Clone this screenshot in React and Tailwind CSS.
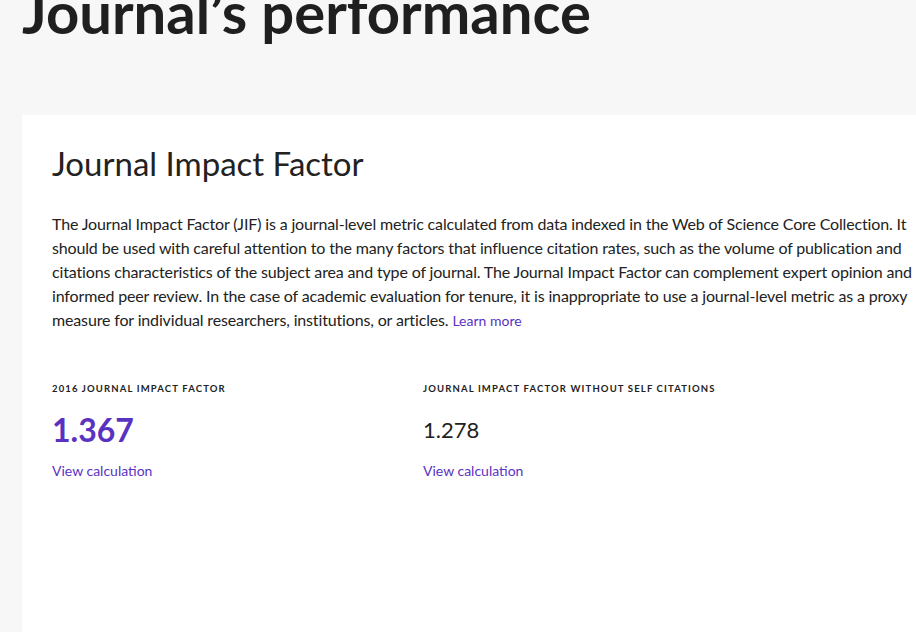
import React from "react";

const Metric = ({ label, value, strong }) => {
  return (
    <div className="w-[371px]">
      <div className="text-[9.5px] font-bold tracking-[0.12em] text-[#222] leading-[14px] uppercase">
        {label}
      </div>
      {strong ? (
        <div className="mt-[14px] text-[32px] font-bold text-[#5a32c2] leading-[40px]">
          {value}
        </div>
      ) : (
        <div className="mt-[14px] text-[22px] text-[#222] leading-[40px]">
          {value}
        </div>
      )}
      <a href="#" className="block mt-[11px] text-[14px] text-[#5a32c2] leading-[20px]">
        View calculation
      </a>
    </div>
  );
};

const App = () => {
  return (
    <div
      className="h-[632px] w-[916px] overflow-hidden bg-[#f7f7f7]"
      style={{ fontFamily: "Lato, 'Noto Sans', sans-serif" }}
    >
      <h1 className="pl-[22px] mt-[-20px] text-[58px] font-bold leading-[64px] text-[#1f1f1f] whitespace-nowrap">
        Journal’s performance
      </h1>
      <div className="ml-[22px] mt-[71px] w-[960px] h-[600px] bg-white pl-[30px] pt-[26px]">
        <h2 className="text-[33px] leading-[44px] text-[#222]">Journal Impact Factor</h2>
        <p className="mt-[27px] text-[16px] leading-[24px] tracking-[-0.15px] text-[#222] whitespace-nowrap">
          The Journal Impact Factor (JIF) is a journal-level metric calculated from data indexed in the Web of Science Core Collection. It
          <br />
          should be used with careful attention to the many factors that influence citation rates, such as the volume of publication and
          <br />
          citations characteristics of the subject area and type of journal. The Journal Impact Factor can complement expert opinion and
          <br />
          informed peer review. In the case of academic evaluation for tenure, it is inappropriate to use a journal-level metric as a proxy
          <br />
          measure for individual researchers, institutions, or articles.{" "}
          <a href="#" className="text-[14px] tracking-normal text-[#5a32c2]">Learn more</a>
        </p>
        <div className="mt-[49px] flex">
          <Metric label="2016 Journal Impact Factor" value="1.367" strong />
          <Metric label="Journal Impact Factor without self citations" value="1.278" />
        </div>
      </div>
    </div>
  );
};

export default App;
